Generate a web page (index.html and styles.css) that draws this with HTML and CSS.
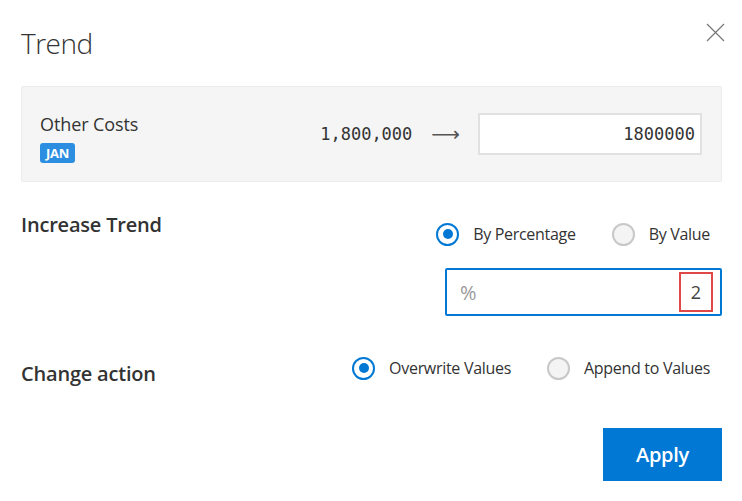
FILE: index.html
```html
<!DOCTYPE html>
<html>
<head>
<meta charset="utf-8">
<link rel="stylesheet" href="styles.css">
</head>
<body>
<div class="dialog">
  <div class="header">
    <h1 class="title">Trend</h1>
    <button class="close" aria-label="Close">
      <svg width="19" height="19" viewBox="0 0 19 19"><path d="M1 1L18 18M18 1L1 18" stroke="#777" stroke-width="1.2" fill="none"/></svg>
    </button>
  </div>
  <div class="card">
    <div class="item">
      <div class="item-name">Other Costs</div>
      <span class="badge">JAN</span>
    </div>
    <div class="values">
      <span class="old">1,800,000</span>
      <span class="arrow">⟶</span>
      <div class="new-input">1800000</div>
    </div>
  </div>
  <div class="row trend-row">
    <div class="label">Increase Trend</div>
    <div class="right">
      <div class="radios">
        <label class="radio checked"><span class="dot"></span>By Percentage</label>
        <label class="radio"><span class="dot"></span>By Value</label>
      </div>
      <div class="pct-input">
        <span class="unit">%</span>
        <span class="val">2</span>
      </div>
    </div>
  </div>
  <div class="row action-row">
    <div class="label">Change action</div>
    <div class="radios">
      <label class="radio checked"><span class="dot"></span>Overwrite Values</label>
      <label class="radio"><span class="dot"></span>Append to Values</label>
    </div>
  </div>
  <div class="footer">
    <button class="apply">Apply</button>
  </div>
</div>
</body>
</html>
```
FILE: styles.css
```css
* { box-sizing: border-box; }
body {
  margin: 0;
  background: #fff;
  font-family: "Open Sans", "Noto Sans", sans-serif;
  color: #323130;
}
.dialog {
  width: 742px;
  height: 501px;
  padding: 0 20px 0 21px;
}
.header {
  display: flex;
  justify-content: space-between;
  align-items: flex-start;
  height: 86px;
}
.title {
  margin: 24px 0 0 0;
  font-size: 28px;
  font-weight: 300;
  letter-spacing: -0.5px;
  color: #333;
  line-height: 38px;
}
.close {
  margin-top: 23px;
  margin-right: -3px;
  padding: 0;
  border: 0;
  background: none;
  width: 19px;
  height: 19px;
}
.card {
  height: 96px;
  background: #f5f5f5;
  border: 1px solid #ececec;
  border-radius: 2px;
  display: flex;
  justify-content: space-between;
  align-items: center;
  padding: 0 19px 0 18px;
}
.item {
  align-self: flex-start;
  margin-top: 26px;
}
.item-name {
  font-size: 18px;
  line-height: 22px;
  color: #333;
  letter-spacing: -0.1px;
}
.badge {
  display: inline-block;
  margin-top: 8px;
  background: #2b8ee0;
  color: #fff;
  font-size: 13px;
  font-weight: 700;
  line-height: 20px;
  height: 20px;
  padding: 0 6px;
  border-radius: 3px;
  letter-spacing: -0.2px;
}
.values {
  display: flex;
  align-items: center;
}
.old {
  font-family: "DejaVu Sans Mono", monospace;
  font-size: 17px;
  color: #333;
  margin-right: 19px;
}
.arrow {
  font-family: "DejaVu Sans", sans-serif;
  font-size: 20px;
  color: #555;
  margin-right: 18px;
}
.new-input {
  width: 224px;
  height: 42px;
  background: #fff;
  border: 2px solid #e1e1e1;
  font-family: "DejaVu Sans Mono", monospace;
  font-size: 17px;
  line-height: 38px;
  text-align: right;
  padding-right: 5px;
  color: #333;
}
.row {
  display: flex;
  justify-content: space-between;
  align-items: flex-start;
}
.trend-row {
  margin-top: 32px;
  height: 102px;
}
.label {
  font-size: 20px;
  line-height: 26px;
  font-weight: 600;
  color: #333;
  letter-spacing: -0.2px;
}
.trend-row .label { margin-top: -2px; }
.right {
  display: flex;
  flex-direction: column;
  align-items: flex-end;
}
.radios {
  display: flex;
  gap: 36px;
  margin-right: 12px;
}
.trend-row .radios { margin-top: 8px; }
.radio {
  display: flex;
  align-items: center;
  font-size: 16px;
  color: #333;
  letter-spacing: -0.3px;
  line-height: 24px;
}
.dot {
  width: 23px;
  height: 23px;
  border-radius: 50%;
  border: 2px solid #c8c8c8;
  background: #f4f4f4;
  margin-right: 14px;
  position: relative;
}
.radio.checked .dot {
  border-color: #0078d4;
  background: #fff;
}
.radio.checked .dot::after {
  content: "";
  position: absolute;
  left: 4.5px;
  top: 4.5px;
  width: 10px;
  height: 10px;
  border-radius: 50%;
  background: #0078d4;
}
.pct-input {
  margin-top: 22px;
  width: 277px;
  height: 48px;
  border: 2px solid #0078d4;
  border-radius: 2px;
  display: flex;
  justify-content: space-between;
  align-items: center;
  padding: 0 7px 0 13px;
  font-size: 18px;
}
.unit { color: #9a9a9a; font-size: 20px; }
.val {
  color: #444;
  width: 34px;
  height: 40px;
  line-height: 36px;
  text-align: center;
  border: 2px solid #e04848;
}
.action-row {
  margin-top: 40px;
  height: 32px;
}
.action-row .label { margin-top: 5px; }
.footer {
  display: flex;
  justify-content: flex-end;
  margin-top: 40px;
}
.apply {
  width: 119px;
  height: 53px;
  background: #0078d4;
  color: #fff;
  border: 0;
  font-family: "Open Sans", sans-serif;
  font-size: 20px;
  font-weight: 600;
  letter-spacing: -0.3px;
}
```
